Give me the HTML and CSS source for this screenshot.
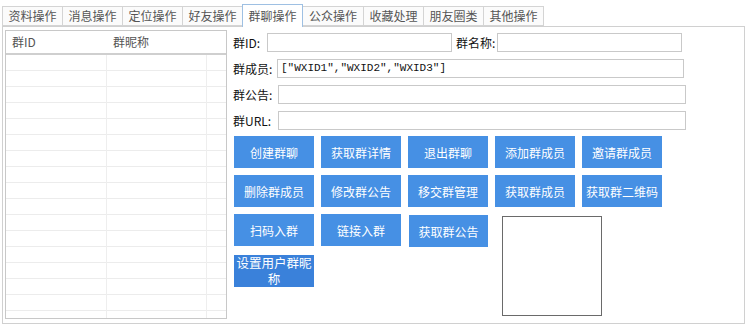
FILE: index.html
```html
<!DOCTYPE html>
<html lang="zh-CN">
<head>
    <meta charset="UTF-8">
    <title>群聊操作</title>
    <link rel="stylesheet" href="styles.css">
</head>
<body>

<!-- Onglets -->
<div class="tabs">
    <div class="tab">资料操作</div>
    <div class="tab">消息操作</div>
    <div class="tab">定位操作</div>
    <div class="tab">好友操作</div>
    <div class="tab active">群聊操作</div>
    <div class="tab">公众操作</div>
    <div class="tab">收藏处理</div>
    <div class="tab">朋友圈类</div>
    <div class="tab">其他操作</div>
</div>

<div class="panel">
    <!-- Liste des groupes -->
    <div class="list">
        <div class="list-head">
            <div class="col">群ID</div>
            <div class="col">群昵称</div>
        </div>
        <div class="list-body"></div>
    </div>

    <div class="form">
        <div class="row">
            <label class="lbl w-id">群ID:</label>
            <input class="field w-short" type="text">
            <label class="lbl w-name">群名称:</label>
            <input class="field w-short" type="text">
        </div>
        <div class="row">
            <label class="lbl w-long">群成员:</label>
            <input class="field mono w-members" type="text" value='["WXID1","WXID2","WXID3"]'>
        </div>
        <div class="row">
            <label class="lbl w-long2">群公告:</label>
            <input class="field w-full" type="text">
        </div>
        <div class="row">
            <label class="lbl w-long2">群URL:</label>
            <input class="field w-full" type="text">
        </div>

        <div class="buttons">
            <button class="btn">创建群聊</button>
            <button class="btn">获取群详情</button>
            <button class="btn">退出群聊</button>
            <button class="btn">添加群成员</button>
            <button class="btn">邀请群成员</button>

            <button class="btn">删除群成员</button>
            <button class="btn">修改群公告</button>
            <button class="btn">移交群管理</button>
            <button class="btn">获取群成员</button>
            <button class="btn">获取群二维码</button>

            <button class="btn">扫码入群</button>
            <button class="btn">链接入群</button>
            <button class="btn shifted">获取群公告</button>
            <div class="qrcode"></div>

            <button class="btn dark">设置用户群昵称</button>
        </div>
    </div>
</div>

</body>
</html>
```

FILE: styles.css
```css
* {
    margin: 0;
    padding: 0;
    box-sizing: border-box;
}
body {
    font-family: "Noto Sans CJK SC", "Liberation Sans", sans-serif;
    font-size: 12px;
    background: #fff;
    color: #222;
    width: 748px;
    height: 328px;
    overflow: hidden;
}
.tabs {
    display: flex;
    padding: 7px 0 0 2px;
    height: 26px;
    align-items: flex-end;
    position: relative;
    z-index: 2;
}
.tab {
    height: 20px;
    line-height: 18px;
    width: 60px;
    text-align: center;
    border: 1px solid #d4d4d4;
    border-right: none;
    background: #fbfbfb;
    color: #555;
    white-space: nowrap;
}
.tab:nth-child(9) {
    border-right: 1px solid #d4d4d4;
    width: 61px;
}
.tab.active {
    height: 23px;
    line-height: 21px;
    margin-bottom: -1px;
    background: #fff;
    border: 1px solid #9ec0e3;
    border-bottom: none;
    width: 61px;
}
.tab.active + .tab {
    border-left: none;
}
.panel {
    display: flex;
    margin-left: 2px;
    width: 743px;
    height: 298px;
    border: 1px solid #d0d0d0;
    padding: 3px 0 0 2px;
}
.list {
    width: 222px;
    height: 289px;
    border: 1px solid #c8c8c8;
    display: flex;
    flex-direction: column;
}
.list-head {
    display: flex;
    height: 24px;
    border-bottom: 2px solid #cfcfcf;
    color: #555;
}
.list-head .col {
    width: 101px;
    padding-left: 6px;
    line-height: 22px;
}
.list-body {
    flex: 1;
    background:
        linear-gradient(to right, transparent 100px, #eeeeee 100px, #eeeeee 101px, transparent 101px, transparent 200px, #eeeeee 200px, #eeeeee 201px, transparent 201px),
        repeating-linear-gradient(to bottom, transparent 0, transparent 15px, #ececec 15px, #ececec 16px);
}
.form {
    margin-left: 6px;
    padding-top: 2px;
}
.row {
    display: flex;
    align-items: center;
    height: 20px;
    margin-bottom: 6px;
}
.lbl {
    font-size: 12px;
    color: #111;
    white-space: nowrap;
}
.w-id { width: 34px; }
.w-name { width: 41px; margin-left: 4px; }
.w-long { width: 44px; }
.w-long2 { width: 45px; }
.field {
    height: 19px;
    border: 1px solid #c9c9c9;
    background: #fff;
    font-family: "Noto Sans CJK SC", sans-serif;
    font-size: 12px;
    padding: 0 3px;
    outline: none;
}
.mono {
    font-family: "Liberation Mono", monospace;
    font-size: 11px;
    color: #111;
}
.w-short { width: 185px; }
.w-members { width: 407px; }
.w-full { width: 408px; }
.buttons {
    display: grid;
    grid-template-columns: repeat(5, 80px);
    grid-auto-rows: 32px;
    column-gap: 7px;
    row-gap: 7px;
    margin-left: 1px;
    align-items: start;
}
.btn {
    height: 32px;
    background: #4690e4;
    color: #fff;
    border: none;
    font-family: "Noto Sans CJK SC", sans-serif;
    font-size: 12px;
    line-height: 15px;
    cursor: pointer;
}
.btn.shifted {
    margin: 1px 0 0 1px;
}
.btn.dark {
    grid-column: 1;
    grid-row: 4;
    background: #3a81da;
    padding: 0;
    margin-top: 2px;
    line-height: 16px;
    font-size: 12.5px;
}
.qrcode {
    grid-column: 4;
    grid-row: 3 / span 2;
    width: 100px;
    height: 100px;
    margin: 2px 0 0 7px;
    border: 1px solid #6a6a6a;
}
```
